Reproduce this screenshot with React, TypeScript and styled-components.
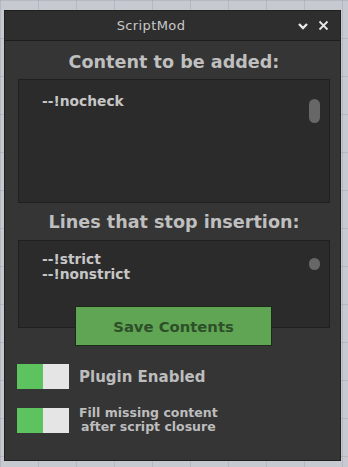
import styled, { createGlobalStyle } from 'styled-components';

const Global = createGlobalStyle`
  html, body {
    margin: 0;
    padding: 0;
    height: 100%;
  }
  body {
    background-color: #c7c9d0;
    background-image:
      linear-gradient(rgba(150, 152, 165, 0.35) 1px, transparent 1px),
      linear-gradient(90deg, rgba(150, 152, 165, 0.35) 1px, transparent 1px);
    background-size: 38px 38px;
    font-family: 'DejaVu Sans', 'Open Sans', sans-serif;
  }
`;

const Page = styled.div`
  padding: 10px 7px 6px 4px;
`;

const Window = styled.div`
  width: 337px;
  height: 451px;
  box-sizing: border-box;
  background: #353535;
  border: 1px solid #202020;
  display: flex;
  flex-direction: column;
`;

const TitleBar = styled.div`
  height: 29px;
  flex: none;
  background: #2e2e2e;
  border-bottom: 1px solid #1d1d1d;
  display: flex;
  align-items: center;
`;

const Title = styled.div`
  flex: 1;
  text-align: center;
  color: #c9c9c9;
  font-size: 13px;
  letter-spacing: 0.4px;
  margin-top: -1px;
`;

const TitleButtons = styled.div`
  display: flex;
  align-items: center;
  gap: 9px;
  padding-right: 11px;
`;

const Body = styled.div`
  flex: 1;
  display: flex;
  flex-direction: column;
  padding: 0 10px 0 13px;
`;

const Heading = styled.div<{ $top: number; $bottom: number }>`
  margin: ${p => p.$top}px 0 ${p => p.$bottom}px;
  color: #bfbfbf;
  font-weight: 700;
  font-size: 17.6px;
  text-align: center;
  line-height: 24px;
`;

const TextBox = styled.div<{ $height: number; $padTop: number }>`
  height: ${p => p.$height}px;
  box-sizing: border-box;
  background: #2b2b2b;
  border: 1px solid #1f1f1f;
  position: relative;
  padding: ${p => p.$padTop}px 0 0 23px;
`;

const Line = styled.div`
  color: #c6c6c6;
  font-weight: 700;
  font-size: 13.8px;
  line-height: 15px;
`;

const Thumb = styled.div<{ $top: number; $h: number }>`
  position: absolute;
  right: 9px;
  top: ${p => p.$top}px;
  width: 11px;
  height: ${p => p.$h}px;
  border-radius: 6px;
  background: #676767;
`;

const SaveButton = styled.button`
  align-self: center;
  margin: -22px 0 0 -1px;
  position: relative;
  width: 197px;
  height: 40px;
  background: #5fa553;
  border: 1px solid #1c2a1a;
  color: #2d4f29;
  font-family: inherit;
  font-weight: 700;
  font-size: 14.8px;
  cursor: pointer;
`;

const Options = styled.div`
  display: flex;
  flex-direction: column;
  gap: 17px;
  margin-top: 18px;
  margin-left: -1px;
`;

const OptionRow = styled.div`
  display: flex;
  align-items: center;
  gap: 10px;
`;

const Toggle = styled.div<{ $on: boolean }>`
  width: 52px;
  height: 25px;
  flex: none;
  display: flex;
  background: #e5e5e5;
  &::before {
    content: '';
    width: 26px;
    background: ${p => (p.$on ? '#5cc35e' : '#e5e5e5')};
  }
`;

const OptionLabel = styled.div`
  color: #bdbdbd;
  font-weight: 700;
  font-size: 15px;
  line-height: 20px;
`;

const SmallLabel = styled.div`
  color: #bdbdbd;
  font-weight: 700;
  font-size: 12.5px;
  line-height: 14px;
  text-align: center;
`;

export default function App() {
  return (
    <>
      <Global />
      <Page>
        <Window>
          <TitleBar>
            <Title>ScriptMod</Title>
            <TitleButtons>
              <svg width="12" height="10" viewBox="0 0 12 10">
                <path d="M2 3 L6 7 L10 3" stroke="#e8e8e8" strokeWidth="2.4" fill="none" />
              </svg>
              <svg width="11" height="11" viewBox="0 0 11 11">
                <path d="M1.5 1.5 L9.5 9.5 M9.5 1.5 L1.5 9.5" stroke="#e8e8e8" strokeWidth="1.8" fill="none" />
              </svg>
            </TitleButtons>
          </TitleBar>
          <Body>
            <Heading $top={9} $bottom={5}>Content to be added:</Heading>
            <TextBox $height={124} $padTop={14}>
              <Line>--!nocheck</Line>
              <Thumb $top={19} $h={24} />
            </TextBox>
            <Heading $top={7} $bottom={6}>Lines that stop insertion:</Heading>
            <TextBox $height={88} $padTop={11}>
              <Line>--!strict</Line>
              <Line>--!nonstrict</Line>
              <Thumb $top={17} $h={12} />
            </TextBox>
            <SaveButton>Save Contents</SaveButton>
            <Options>
              <OptionRow>
                <Toggle $on />
                <OptionLabel>Plugin Enabled</OptionLabel>
              </OptionRow>
              <OptionRow>
                <Toggle $on />
                <div>
                  <SmallLabel>Fill missing content</SmallLabel>
                  <SmallLabel>after script closure</SmallLabel>
                </div>
              </OptionRow>
            </Options>
          </Body>
        </Window>
      </Page>
    </>
  );
}
